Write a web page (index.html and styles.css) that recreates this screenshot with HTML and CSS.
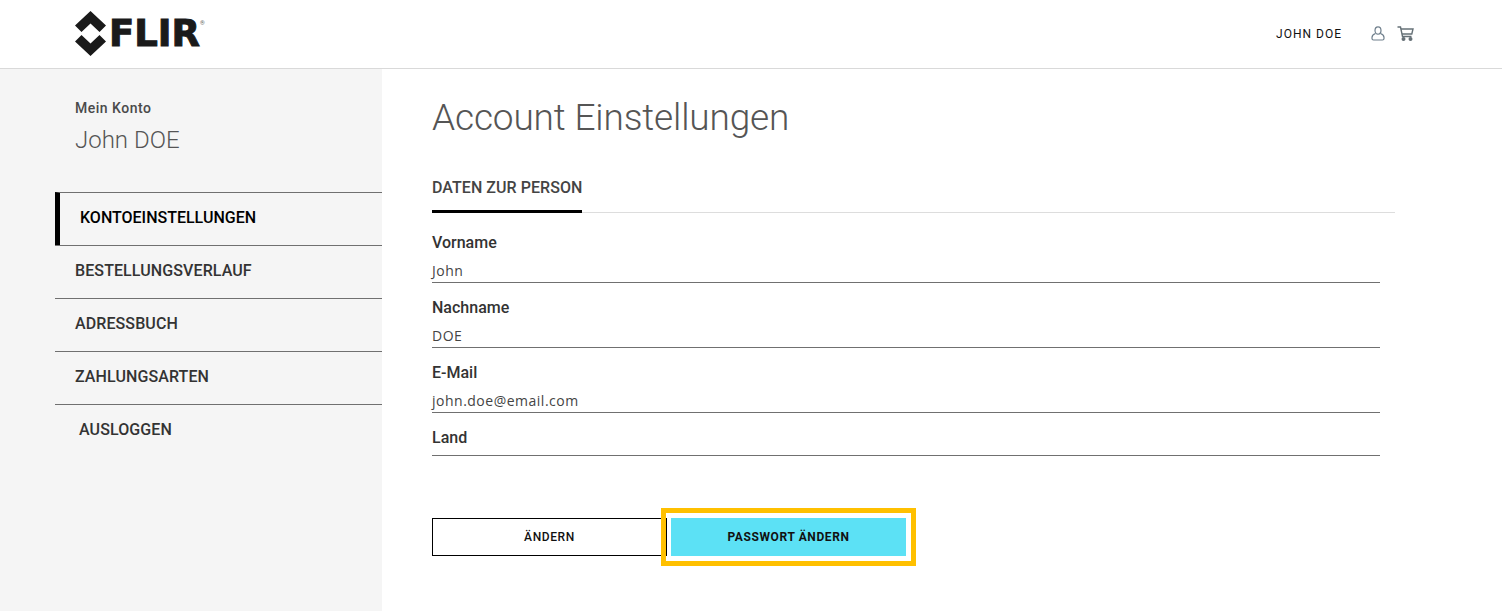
FILE: index.html
```html
<!DOCTYPE html>
<html lang="de">
<head>
<meta charset="utf-8">
<title>Account Einstellungen</title>
<link rel="stylesheet" href="styles.css">
</head>
<body>
<header class="topbar">
  <a class="logo" href="#">
    <svg class="logo-mark" viewBox="0 0 31 45" width="31" height="45">
      <path fill="#1a1a1a" d="M15.500 0 31 14.500 24.500 21 15.500 12.500 6.500 21 0 14.500Z"/>
      <path fill="#1a1a1a" d="M15.500 45 31 30.500 24.500 24 15.500 32.500 6.500 24 0 30.500Z"/>
    </svg>
    <span class="logo-text">FLIR</span><span class="logo-reg">®</span>
  </a>
  <div class="user">
    <span class="user-name">JOHN DOE</span>
    <svg class="icon-user" viewBox="0 0 14 15" width="14" height="15" fill="none" stroke="#6f7f8c" stroke-width="1.200">
      <ellipse cx="7" cy="4.500" rx="3" ry="3.700"/>
      <path d="M4.500 7.500C2.500 8.200 1 9.500 1 11.500V12.500C1 13.500 1.800 14 2.500 14H11.500C12.300 14 13 13.500 13 12.500V11.500C13 9.500 11.500 8.200 9.500 7.500"/>
    </svg>
    <svg class="icon-cart" viewBox="0 0 17 15" width="17" height="15" fill="none" stroke="#667177" stroke-width="1.400">
      <path d="M0.500 1H3.500L5.500 10.500H14.500"/>
      <path d="M4 3H16L14.800 8H5"/>
      <circle cx="6.500" cy="13" r="1.300" fill="#667177"/>
      <circle cx="13.500" cy="13" r="1.300" fill="#667177"/>
    </svg>
  </div>
</header>
<div class="page">
  <aside class="sidebar">
    <div class="account">
      <div class="account-label">Mein Konto</div>
      <div class="account-name">John DOE</div>
    </div>
    <nav class="side-nav">
      <a class="nav-item active" href="#">KONTOEINSTELLUNGEN</a>
      <a class="nav-item" href="#">BESTELLUNGSVERLAUF</a>
      <a class="nav-item" href="#">ADRESSBUCH</a>
      <a class="nav-item" href="#">ZAHLUNGSARTEN</a>
      <a class="nav-item logout" href="#">AUSLOGGEN</a>
    </nav>
  </aside>
  <main class="content">
    <h1 class="title">Account Einstellungen</h1>
    <div class="tabs"><span class="tab">DATEN ZUR PERSON</span></div>
    <form class="fields">
      <div class="field"><div class="field-label">Vorname</div><div class="field-value">John</div></div>
      <div class="field"><div class="field-label">Nachname</div><div class="field-value">DOE</div></div>
      <div class="field"><div class="field-label">E-Mail</div><div class="field-value">john.doe@email.com</div></div>
      <div class="field empty"><div class="field-label">Land</div></div>
    </form>
    <div class="actions">
      <button class="btn" type="button">ÄNDERN</button>
      <button class="btn primary" type="button">PASSWORT ÄNDERN</button>
      <span class="highlight"></span>
    </div>
  </main>
</div>
</body>
</html>
```
FILE: styles.css
```css
* { box-sizing: border-box; }
html, body { margin: 0; height: 100%; overflow: hidden; }
body { font-family: Roboto, "Liberation Sans", sans-serif; color: #333; background: #fff; }
a { color: inherit; text-decoration: none; }

.topbar { height: 69px; border-bottom: 1px solid #d9d9d9; display: flex; align-items: center; justify-content: space-between; padding: 0 88px 1px 75px; }
.logo { display: flex; align-items: center; color: #1a1a1a; }
.logo-mark { display: block; }
.logo-text { font-family: "DejaVu Sans", sans-serif; font-weight: 700; font-size: 37px; line-height: 40px; margin-left: 3px; letter-spacing: 0; -webkit-text-stroke: 1px #1a1a1a; }
.logo-reg { font-size: 6px; align-self: flex-start; margin-top: 8px; color: #666; }
.user { display: flex; align-items: center; }
.user-name { font-size: 12px; letter-spacing: 1px; color: #111; margin-right: 29px; }
.icon-user { margin-right: 12px; }

.page { display: flex; height: 542px; }
.sidebar { width: 382px; background: #f5f5f5; padding: 30px 0 0 55px; flex: none; }
.account { padding-left: 20px; height: 93px; }
.account-label { font-size: 14px; line-height: 18px; font-weight: 500; letter-spacing: 0.5px; color: #4a4a4a; }
.account-name { font-size: 24px; line-height: 28px; margin-top: 9px; font-weight: 300; color: #555; }
.side-nav { margin-top: 0; }
.nav-item { display: block; height: 53px; border-top: 1px solid #707070; padding-left: 20px; line-height: 49px; font-size: 16px; font-weight: 500; letter-spacing: 0.1px; color: #333; }
.nav-item.active { border-left: 5px solid #000; color: #000; letter-spacing: 0; }
.nav-item.logout { padding-left: 24px; }

.content { flex: 1; padding: 27px 107px 0 50px; }
.title { margin: 0; font-size: 37px; line-height: 44px; font-weight: 300; color: #555; letter-spacing: -0.15px; }
.tabs { margin-top: 28px; border-bottom: 1px solid #ddd; height: 45px; }
.tab { display: inline-block; height: 45px; padding-top: 8px; border-bottom: 3px solid #000; font-size: 16px; font-weight: 500; line-height: 24px; letter-spacing: 0.05px; color: #444; }
.fields { width: 948px; margin-top: 18px; }
.field { height: 65px; }
.field-label { font-size: 16px; font-weight: 500; line-height: 24px; color: #333; }
.field-value { height: 25px; margin-top: 3px; padding-top: 3px; border-bottom: 1px solid #707070; font-family: "Open Sans", sans-serif; font-size: 14px; line-height: 20px; letter-spacing: 0.5px; color: #444; }
.field.empty { height: 30px; border-bottom: 1px solid #707070; }

.actions { position: relative; display: flex; margin-top: 62px; }
.btn { height: 38px; width: 235px; background: #fff; border: 1px solid #000; padding: 0; font-family: Roboto, sans-serif; font-size: 12px; font-weight: 500; letter-spacing: 0.6px; color: #111; }
.primary { background: #5ce1f5; border: 0; margin-left: 4px; font-weight: 700; color: #111; }
.highlight { position: absolute; left: 229px; top: -10px; width: 255px; height: 58px; border: 5px solid #ffc000; pointer-events: none; }
```
